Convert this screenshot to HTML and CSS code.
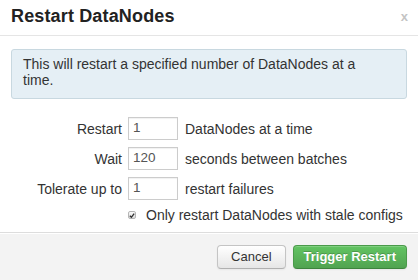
FILE: index.html
```html
<!DOCTYPE html>
<html lang="en">
<head>
    <meta charset="UTF-8">
    <title>Restart DataNodes</title>
    <link rel="stylesheet" href="styles.css">
</head>
<body>
    <div class="modal">
        <div class="modal-header">
            <h3>Restart DataNodes</h3>
            <span class="close">x</span>
        </div>
        <div class="modal-body">
            <div class="alert">This will restart a specified number of DataNodes at a time.</div>
            <div class="restart-form">
                <label class="label">Restart</label>
                <input class="field" type="text" value="1">
                <span class="hint">DataNodes at a time</span>

                <label class="label">Wait</label>
                <input class="field" type="text" value="120">
                <span class="hint">seconds between batches</span>

                <label class="label">Tolerate up to</label>
                <input class="field" type="text" value="1">
                <span class="hint">restart failures</span>

                <div class="check-row">
                    <span class="check">
                        <svg width="7" height="7" viewBox="0 0 7 7"><path d="M1 3.8 L2.8 5.6 L6 1.2" fill="none" stroke="#333" stroke-width="1.6"/></svg>
                    </span>
                    <span>Only restart DataNodes with stale configs</span>
                </div>
            </div>
        </div>
        <div class="modal-footer">
            <button class="btn btn-cancel">Cancel</button>
            <button class="btn btn-success">Trigger Restart</button>
        </div>
    </div>
</body>
</html>
```

FILE: styles.css
```css
* {
    margin: 0;
    padding: 0;
    box-sizing: border-box;
}

body {
    font-family: "Liberation Sans", Arial, sans-serif;
    font-size: 14px;
    color: #333;
    background: #fff;
    width: 418px;
    height: 280px;
    overflow: hidden;
}

.modal {
    display: flex;
    flex-direction: column;
    height: 280px;
}

.modal-header {
    display: flex;
    justify-content: space-between;
    align-items: center;
    height: 36px;
    padding: 0 10px 2px 11px;
    border-bottom: 1px solid #e5e5e5;
}

.modal-header h3 {
    font-size: 18px;
    font-weight: bold;
    color: #222;
    letter-spacing: 0.15px;
}

.close {
    font-size: 13px;
    font-weight: bold;
    color: #c4c4c4;
}

.modal-body {
    flex: 1;
    padding: 13px 11px 0;
}

.alert {
    background: #e5eff5;
    border: 1px solid #c8d8e0;
    border-radius: 3px;
    padding: 6px 35px 10px 11px;
    line-height: 16px;
    color: #333;
}

.restart-form {
    display: grid;
    grid-template-columns: 111px 50px auto;
    column-gap: 6px;
    row-gap: 7px;
    align-items: center;
    margin-top: 18px;
}

.label {
    text-align: right;
}

.hint {
    padding-left: 1px;
}

.field {
    width: 50px;
    height: 23px;
    border: 1px solid #ccc;
    padding: 0 4px 2px;
    font-family: inherit;
    font-size: 13.5px;
    color: #555;
    box-shadow: inset 0 1px 1px rgba(0, 0, 0, 0.06);
}

.check-row {
    grid-column: 2 / 4;
    display: flex;
    align-items: center;
    gap: 10px;
    margin-top: 0;
}

.check {
    display: flex;
    justify-content: center;
    align-items: center;
    width: 8px;
    height: 8px;
    border: 1px solid #b5b5b5;
    border-radius: 2px;
    background: linear-gradient(#fafafa, #dcdcdc);
}

.modal-footer {
    display: flex;
    justify-content: flex-end;
    gap: 7px;
    height: 48px;
    padding: 12px 11px 0;
    background: #f3f3f3;
    border-top: 1px solid #ddd;
    box-shadow: inset 0 1px 0 #fff;
}

.btn {
    height: 24px;
    padding: 0 10px 1px;
    font-family: inherit;
    font-size: 13px;
    color: #333;
    border: 1px solid #c4c4c4;
    border-bottom-color: #b0b0b0;
    border-radius: 4px;
    background: linear-gradient(#ffffff, #e6e6e6);
    box-shadow: inset 0 1px 0 rgba(255, 255, 255, 0.2), 0 1px 2px rgba(0, 0, 0, 0.05);
}

.btn-cancel {
    padding: 0 13px 1px;
}

.btn-success {
    font-weight: bold;
    color: #fff;
    border-color: #4a9a4a #4a9a4a #3d843d;
    background: linear-gradient(#62c462, #51a351);
    text-shadow: 0 -1px 0 rgba(0, 0, 0, 0.2);
}
```
